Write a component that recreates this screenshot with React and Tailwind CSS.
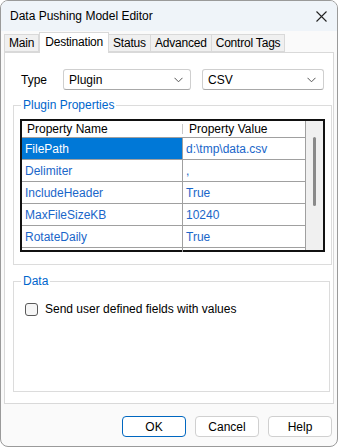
import React from 'react';

const font = { fontFamily: '"Segoe UI", "Liberation Sans", Arial, sans-serif' };

const rows = [
  { name: 'FilePath', value: 'd:\\tmp\\data.csv', selected: true },
  { name: 'Delimiter', value: ',' },
  { name: 'IncludeHeader', value: 'True' },
  { name: 'MaxFileSizeKB', value: '10240' },
  { name: 'RotateDaily', value: 'True' },
];

const tabs = ['Main', 'Destination', 'Status', 'Advanced', 'Control Tags'];

const Chevron = () => (
  <svg width="9" height="6" viewBox="0 0 9 6" fill="none">
    <path d="M0.5 0.8 L4.5 4.8 L8.5 0.8" stroke="#555" strokeWidth="1" />
  </svg>
);

const Combo = ({ value, width }) => (
  <div className={`flex h-[21px] items-center justify-between rounded-[3px] border border-[#cfcfcf] border-b-[#a8a8a8] bg-white pl-[5px] pr-[7px] text-[12px] text-black ${width}`}>
    <span>{value}</span>
    <Chevron />
  </div>
);

const App = () => {
  return (
    <div style={font} className="h-[447px] w-[338px] overflow-hidden rounded-lg border border-[#9a9a9a] bg-[#fafafa] text-[12px] text-black">
      {/* title bar */}
      <div className="flex h-[30px] items-center justify-between bg-[#eff4f9] pl-[9px] pr-[10px]">
        <span className="text-[12px]">Data Pushing Model Editor</span>
        <svg width="11" height="11" viewBox="0 0 11 11">
          <path d="M0.5 0.5 L10.5 10.5 M10.5 0.5 L0.5 10.5" stroke="#222" strokeWidth="1.1" />
        </svg>
      </div>

      {/* tabs */}
      <div className="flex h-[21px] items-end pl-[3px] text-[12px] tracking-[-0.2px]">
        {tabs.map((t) =>
          t === 'Destination' ? (
            <div key={t} className="relative z-10 -mb-px flex h-[21px] items-center border border-b-0 border-[#d9d9d9] bg-white px-[5px] pb-[2px]">
              {t}
            </div>
          ) : (
            <div key={t} className="-ml-px flex h-[18px] items-center border border-[#d9d9d9] bg-[#f0f0f0] px-[4px] first:ml-0">
              {t}
            </div>
          )
        )}
      </div>

      {/* tab page */}
      <div className="mx-[3px] h-[352px] border border-[#d9d9d9] bg-white">
        <div className="mt-[16px] flex items-center pl-[16px]">
          <span className="w-[42px]">Type</span>
          <Combo value="Plugin" width="w-[128px]" />
          <div className="w-[11px]" />
          <Combo value="CSV" width="w-[122px]" />
        </div>

        {/* plugin properties */}
        <fieldset className="ml-[8px] mt-[8px] h-[167px] w-[317px] border border-[#dcdcdc] px-[6px]">
          <legend className="ml-[1px] px-[2px] text-[12px] leading-[14px] text-[#0066cc]">Plugin Properties</legend>
          <div className="mt-[7px] flex h-[133px] w-[305px] border-2 border-[#111] bg-white">
            <div className="flex-1">
              <div className="flex h-[17px] border-b border-[#a0a0a0]">
                <div className="flex w-[160px] items-center pl-[5px]">Property Name</div>
                <div className="my-[3px] w-px bg-[#c8c8c8]" />
                <div className="flex flex-1 items-center pl-[6px]">Property Value</div>
              </div>
              {rows.map((r) => (
                <div key={r.name} className="flex h-[22px] border-b border-[#a0a0a0] text-[#1a66c9]">
                  <div className={`flex w-[160px] items-center pl-[3px] ${r.selected ? 'bg-[#0078d7] text-white' : ''}`}>{r.name}</div>
                  <div className="w-px bg-[#a0a0a0]" />
                  <div className="flex flex-1 items-center pl-[3px]">{r.value}</div>
                </div>
              ))}
              <div className="flex h-[4px]">
                <div className="w-[160px]" />
                <div className="w-px bg-[#a0a0a0]" />
              </div>
            </div>
            <div className="flex w-[18px] justify-center border-l border-[#a0a0a0] bg-[#f0f0f0] pt-[16px]">
              <div className="h-[69px] w-[3px] rounded-full bg-[#8a8a8a]" />
            </div>
          </div>
        </fieldset>

        {/* data */}
        <fieldset className="ml-[8px] mt-[9px] h-[118px] w-[317px] border border-[#dcdcdc] px-[11px]">
          <legend className="ml-[-4px] px-[2px] text-[12px] leading-[14px] text-[#0066cc]">Data</legend>
          <label className="mt-[12px] flex items-center">
            <span className="mr-[7px] h-[13px] w-[13px] rounded-[3px] border border-[#5a5a5a] bg-[#f6f6f6]" />
            <span>Send user defined fields with values</span>
          </label>
        </fieldset>
      </div>

      {/* buttons */}
      <div className="mt-[12px] flex justify-end gap-[9px] pr-[5px]">
        <button className="h-[21px] w-[64px] rounded-[4px] border border-[#0067c0] bg-white text-[12px]">OK</button>
        <button className="h-[21px] w-[64px] rounded-[4px] border border-[#d0d0d0] bg-white text-[12px]">Cancel</button>
        <button className="h-[21px] w-[64px] rounded-[4px] border border-[#d0d0d0] bg-white text-[12px]">Help</button>
      </div>
    </div>
  );
};

export default App;
